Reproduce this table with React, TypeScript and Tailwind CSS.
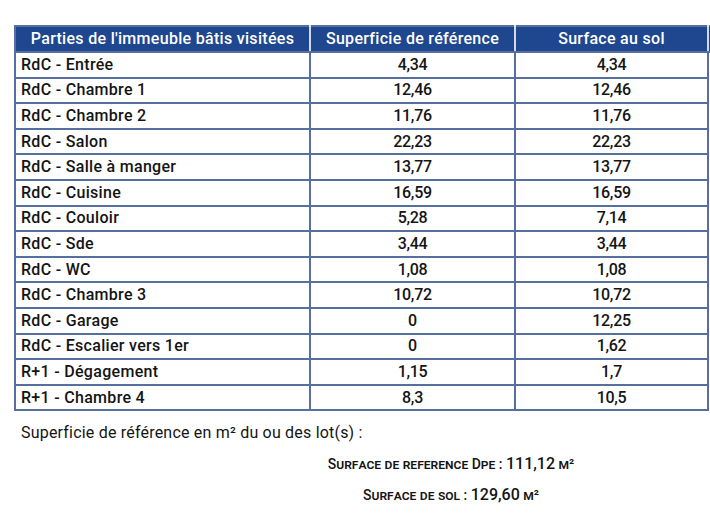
const rows: [string, string, string][] = [
  ['RdC - Entrée', '4,34', '4,34'],
  ['RdC - Chambre 1', '12,46', '12,46'],
  ['RdC - Chambre 2', '11,76', '11,76'],
  ['RdC - Salon', '22,23', '22,23'],
  ['RdC - Salle à manger', '13,77', '13,77'],
  ['RdC - Cuisine', '16,59', '16,59'],
  ['RdC - Couloir', '5,28', '7,14'],
  ['RdC - Sde', '3,44', '3,44'],
  ['RdC - WC', '1,08', '1,08'],
  ['RdC - Chambre 3', '10,72', '10,72'],
  ['RdC - Garage', '0', '12,25'],
  ['RdC - Escalier vers 1er', '0', '1,62'],
  ['R+1 - Dégagement', '1,15', '1,7'],
  ['R+1 - Chambre 4', '8,3', '10,5'],
];

export default function App() {
  return (
    <div className="w-[710px] h-[532px] overflow-hidden bg-white text-[#141414] font-['Roboto','Liberation_Sans',sans-serif]">
      <div className="pt-[25px] pl-[14px]">
        <table className="border-collapse table-fixed w-[720px] text-[16px] leading-none">
          <colgroup>
            <col className="w-[295px]" />
            <col className="w-[205px]" />
            <col className="w-[193px]" />
            <col className="w-[27px]" />
          </colgroup>
          <thead>
            <tr className="h-[26px] bg-[#1e4790] text-white">
              <th className="border-2 border-[#55709e] border-r-white/80 font-medium tracking-[0.3px]">Parties de l'immeuble bâtis visitées</th>
              <th className="border-2 border-[#55709e] border-r-white/80 font-medium tracking-[0.3px]">Superficie de référence</th>
              <th className="border-2 border-[#55709e] border-r-white/80 font-medium tracking-[0.3px]">Surface au sol</th>
              <th className="border-2 border-[#55709e] border-r-0"></th>
            </tr>
          </thead>
          <tbody>
            {rows.map(([name, ref, sol]) => (
              <tr key={name} className="h-[25.6px] font-medium">
                <td className="border-2 border-[#55709e] pl-[5px] tracking-[0.3px]">{name}</td>
                <td className="border-2 border-[#55709e] text-center tracking-[-0.3px]">{ref}</td>
                <td className="border-2 border-[#55709e] text-center tracking-[-0.3px]">{sol}</td>
                <td className="border-0"></td>
              </tr>
            ))}
          </tbody>
        </table>
      </div>
      <p className="mt-[12px] ml-[21px] text-[16px] leading-[20px] tracking-[0.2px]">Superficie de référence en m² du ou des lot(s) :</p>
      <div className="mt-[11px] flex flex-col items-center pl-[192px] gap-[11px] font-medium text-[14px] leading-[19px] [font-variant-caps:small-caps]">
        <p>Surface de reference Dpe : <span className="text-[16px]">111,12</span> m²</p>
        <p>Surface de sol : <span className="text-[16px]">129,60</span> m²</p>
      </div>
    </div>
  );
}
